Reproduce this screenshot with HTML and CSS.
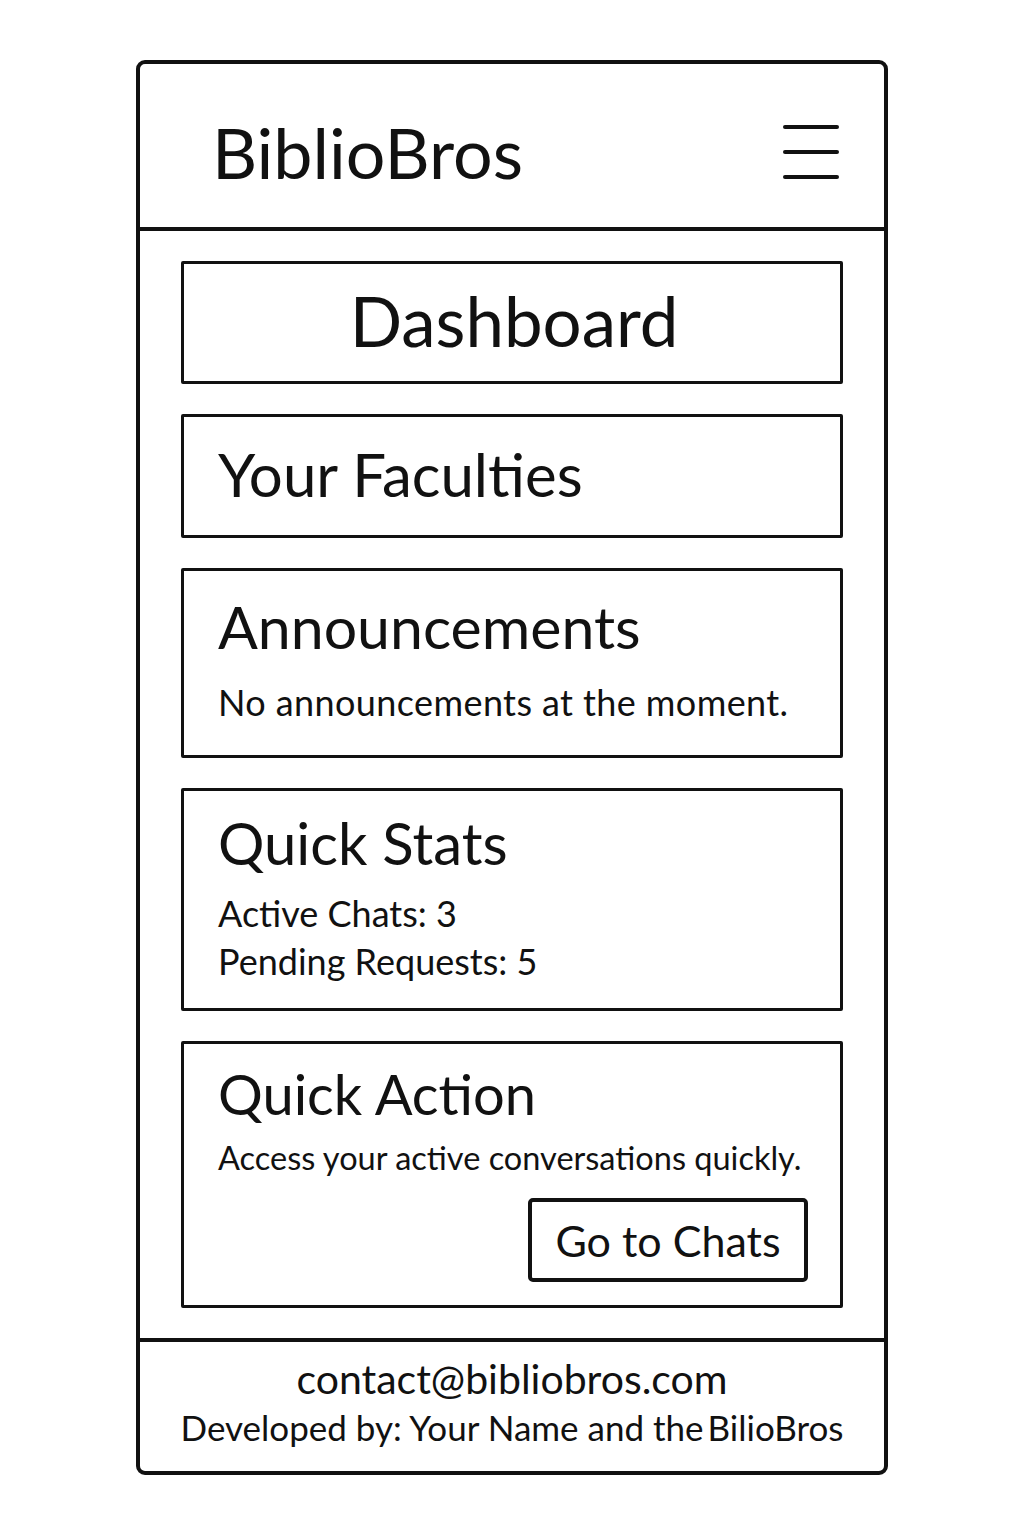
FILE: index.html
```html
<!DOCTYPE html>
<html lang="en">
<head>
<meta charset="utf-8">
<title>BiblioBros – Dashboard</title>
<link rel="stylesheet" href="styles.css">
</head>
<body>
<div class="frame">
  <header class="header">
    <div class="logo">BiblioBros</div>
    <div class="burger" aria-label="Menu">
      <span></span><span></span><span></span>
    </div>
  </header>
  <main class="main">
    <section class="card card-title"><h1>Dashboard</h1></section>
    <section class="card card-faculties"><h2>Your Faculties</h2></section>
    <section class="card card-announce">
      <h2>Announcements</h2>
      <p>No announcements at the moment.</p>
    </section>
    <section class="card card-stats">
      <h2>Quick Stats</h2>
      <p>Active Chats: 3</p>
      <p>Pending Requests: 5</p>
    </section>
    <section class="card card-action">
      <h2>Quick Action</h2>
      <p>Access your active conversations quickly.</p>
      <div class="actions"><button class="btn">Go to Chats</button></div>
    </section>
  </main>
  <footer class="footer">
    <div class="email">contact@bibliobros.com</div>
    <div class="dev">Developed by: Your Name and the<span class="tight">BilioBros</span></div>
  </footer>
</div>
</body>
</html>
```
FILE: styles.css
```css
* { box-sizing: border-box; }
html, body { margin: 0; padding: 0; background: #fff; }
body {
  font-family: Lato, "Open Sans", sans-serif;
  color: #111;
}
.frame {
  width: 752px;
  margin: 60px auto 0;
  border: 4px solid #111;
  border-radius: 9px;
}
.header {
  height: 167px;
  border-bottom: 4px solid #111;
  display: flex;
  align-items: center;
  justify-content: space-between;
  padding: 13px 45px 0 72px;
}
.logo {
  font-size: 70px;
  line-height: 1.2;
}
.burger {
  width: 56px;
  display: flex;
  flex-direction: column;
  gap: 21px;
}
.burger span {
  display: block;
  height: 4px;
  background: #111;
  border-radius: 2px;
}
.main {
  padding: 30px 41px;
  display: flex;
  flex-direction: column;
  gap: 30px;
}
.card {
  border: 3px solid #111;
  border-radius: 2px;
  padding: 18px 30px 20px 34px;
}
.card h1, .card h2, .card p { margin: 0; font-weight: 400; }
.card h1 {
  font-size: 69px;
  line-height: 1.2;
  text-align: center;
}
.card h2 {
  font-size: 58px;
  line-height: 1.2;
}
.card p {
  font-size: 36px;
  line-height: 48px;
  white-space: nowrap;
}
.card-title { height: 123px; padding-top: 16px; }
.card-faculties { height: 124px; padding-top: 21px; }
.card-faculties h2 { font-size: 60px; }
.card-announce { height: 190px; padding-top: 21px; }
.card-announce h2 { font-size: 59px; }
.card-announce p { margin-top: 15px; letter-spacing: 0.4px; }
.card-stats { height: 223px; padding-top: 17px; }
.card-stats h2 { margin-bottom: 11px; }
.card-action { height: 267px; padding-top: 16px; }
.card-action h2 { font-size: 56px; }
.card-action p { margin-top: 7px; font-size: 32.5px; }
.actions {
  display: flex;
  justify-content: flex-end;
  margin-top: 16px;
}
.btn {
  width: 280px;
  height: 84px;
  border: 4px solid #111;
  border-radius: 5px;
  background: #fff;
  color: #111;
  font-family: Lato, "Open Sans", sans-serif;
  font-size: 43px;
  padding: 0;
  margin-right: 2px;
}
.footer {
  height: 133px;
  border-top: 4px solid #111;
  text-align: center;
  padding-top: 12px;
}
.email {
  font-size: 41px;
  line-height: 50px;
}
.dev {
  font-size: 35px;
  line-height: 46px;
}
.tight { margin-left: 4px; }
```
